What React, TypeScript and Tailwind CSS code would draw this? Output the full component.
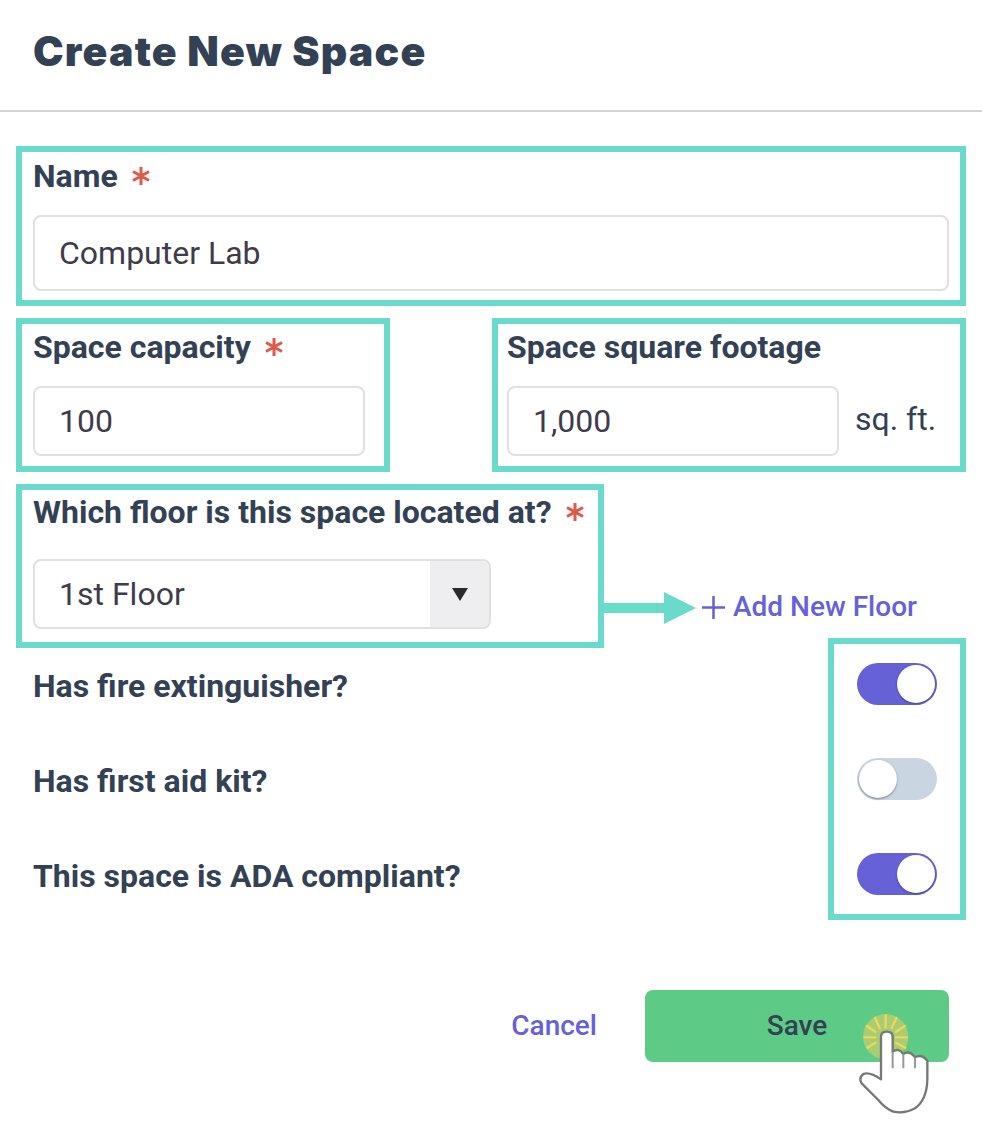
const Req = ({ className = "" }: { className?: string }) => (
  <svg viewBox="0 0 20 20" className={"w-5 h-5 stroke-[#e0584c] " + className} strokeWidth="3" fill="none">
    <path d="M10 1v18M2 5.5l16 9M18 5.5l-16 9" />
  </svg>
);

const Field = ({ value, className = "" }: { value: string; className?: string }) => (
  <div className={"flex items-center h-[76px] pl-6 border-2 border-[#e0e0e0] rounded-lg text-[32px] text-[#3f3b4b] " + className}>
    {value}
  </div>
);

const Toggle = ({ on }: { on: boolean }) => (
  <div className={"flex items-center w-20 h-[42px] p-0.5 rounded-full " + (on ? "bg-[#6761d8] justify-end" : "bg-[#c9d5e1] justify-start")}>
    <div className="w-[38px] h-[38px] rounded-full bg-white shadow-[0_1px_2px_rgba(30,41,59,0.5)]" />
  </div>
);

const toggles = [
  { label: "Has fire extinguisher?", on: true },
  { label: "Has first aid kit?", on: false },
  { label: "This space is ADA compliant?", on: true },
];

const Cursor = () => (
  <svg viewBox="0 0 420 390" className="absolute left-[820px] top-[990px] w-[140px] h-[130px]">
    <circle cx="197" cy="140" r="68" fill="#a9cd72" />
    <g stroke="#f0d65a" strokeWidth="7" strokeLinecap="round">
      <path d="M197 76v36M165 84l14 30M229 84l-14 30M140 108l26 17M254 108l-26 17M134 142h32M260 142h-32M228 158l28 15M166 158l-24 15" />
    </g>
    <path
      d="M183 140Q183 125 200 125Q218 125 218 140L218 185Q236 172 250 192Q268 180 285 202Q305 190 322 212L322 270Q320 330 285 355Q255 372 220 365Q195 355 175 330L125 280Q115 265 130 252Q150 245 183 268Z"
      fill="#fff"
      stroke="#777777"
      strokeWidth="7"
      strokeLinejoin="round"
    />
    <path d="M218 185V235M250 192V235M285 202V235" stroke="#999999" strokeWidth="6" fill="none" />
  </svg>
);

export default function App() {
  return (
    <div className="relative w-[982px] h-[1132px] bg-white text-[#334155] font-['Roboto',sans-serif] overflow-hidden">
      <header className="flex items-center h-[112px] pl-[33px] border-b-2 border-[#d4d4d8]">
        <h1 className="text-[41px] font-black tracking-[1.2px] font-['Inter',sans-serif] pb-[6px] whitespace-nowrap">Create New Space</h1>
      </header>

      <main className="px-4 pt-[34px]">
        <section className="h-[160px] px-[11px] border-[6px] border-[#6adacc]">
          <label className="flex items-center gap-[13px] h-[48px] text-[32px] font-bold">
            Name <Req />
          </label>
          <Field value="Computer Lab" className="mt-[15px]" />
        </section>

        <div className="flex justify-between mt-3">
          <section className="w-[374px] h-[154px] px-[11px] border-[6px] border-[#6adacc]">
            <label className="flex items-center gap-[13px] h-[46px] text-[32px] font-bold">
              Space capacity <Req />
            </label>
            <Field value="100" className="!h-[70px] w-[332px] mt-4" />
          </section>
          <section className="w-[474px] h-[154px] pl-[9px] border-[6px] border-[#6adacc]">
            <label className="flex items-center h-[46px] text-[32px] font-bold">Space square footage</label>
            <div className="flex items-center gap-4 mt-4">
              <Field value="1,000" className="!h-[70px] w-[332px]" />
              <span className="text-[32px] whitespace-nowrap mb-1">sq. ft.</span>
            </div>
          </section>
        </div>

        <div className="flex items-start mt-3">
          <section className="w-[588px] h-[164px] px-[11px] border-[6px] border-[#6adacc]">
            <label className="flex items-center gap-[13px] h-[44px] text-[32px] font-bold whitespace-nowrap">
              Which floor is this space located at? <Req />
            </label>
            <div className="flex items-stretch w-[458px] h-[70px] mt-[25px] border-2 border-[#e0e0e0] rounded-lg overflow-hidden text-[32px] text-[#3f3b4b]">
              <div className="flex-1 flex items-center pl-6">1st Floor</div>
              <div className="flex items-center justify-center w-[59px] bg-[#eeeef0]">
                <svg viewBox="0 0 16 13" className="w-4 h-[13px] fill-[#2a2a2e]">
                  <path d="M0 0h16L8 13z" />
                </svg>
              </div>
            </div>
          </section>
          <svg viewBox="0 0 92 32" className="w-[92px] h-8 mt-[108px] fill-[#6adacc] shrink-0">
            <path d="M0 11h60V0l32 16-32 16V21H0z" />
          </svg>
          <a className="flex items-center gap-2 mt-[102px] ml-[6px] text-[28px] font-medium text-[#6761d8] whitespace-nowrap">
            <svg viewBox="0 0 23 23" className="w-[23px] h-[23px] stroke-[#6761d8]" strokeWidth="2.5">
              <path d="M11.5 0v23M0 11.5h23" />
            </svg>
            Add New Floor
          </a>
        </div>

        <div className="relative flex flex-col gap-[53px] mt-[15px] pl-[17px] pr-[29px]">
          {toggles.map((t) => (
            <div key={t.label} className="flex items-center justify-between h-[42px]">
              <span className="text-[32px] font-bold pt-1">{t.label}</span>
              <Toggle on={t.on} />
            </div>
          ))}
          <div className="absolute -top-[25px] -bottom-[25px] right-0 w-[138px] border-[6px] border-[#6adacc]" />
        </div>

        <footer className="flex items-center justify-end gap-12 mt-[95px] pr-[17px]">
          <a className="text-[28px] font-medium text-[#6761d8]">Cancel</a>
          <button className="w-[304px] h-[72px] rounded-lg bg-[#5dcb85] text-[28px] font-medium">Save</button>
        </footer>
      </main>

      <Cursor />
    </div>
  );
}
